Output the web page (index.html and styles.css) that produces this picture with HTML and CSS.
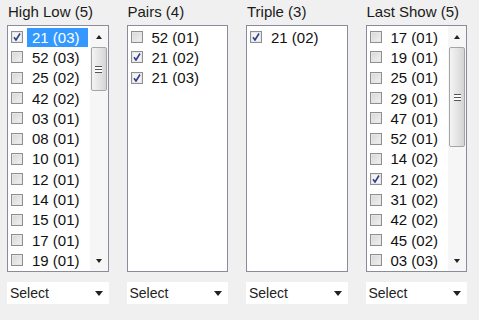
FILE: index.html
```html
<!DOCTYPE html>
<html lang="en">
<head>
    <meta charset="UTF-8">
    <title>Number Filters</title>
    <link rel="stylesheet" href="styles.css">
</head>
<body>
    <div class="filters">

        <div class="column">
            <div class="caption">High Low (5)</div>
            <div class="listbox">
                <ul class="items">
                    <li class="item"><span class="check on"></span><span class="text selected">21 (03)</span></li>
                    <li class="item"><span class="check"></span><span class="text">52 (03)</span></li>
                    <li class="item"><span class="check"></span><span class="text">25 (02)</span></li>
                    <li class="item"><span class="check"></span><span class="text">42 (02)</span></li>
                    <li class="item"><span class="check"></span><span class="text">03 (01)</span></li>
                    <li class="item"><span class="check"></span><span class="text">08 (01)</span></li>
                    <li class="item"><span class="check"></span><span class="text">10 (01)</span></li>
                    <li class="item"><span class="check"></span><span class="text">12 (01)</span></li>
                    <li class="item"><span class="check"></span><span class="text">14 (01)</span></li>
                    <li class="item"><span class="check"></span><span class="text">15 (01)</span></li>
                    <li class="item"><span class="check"></span><span class="text">17 (01)</span></li>
                    <li class="item"><span class="check"></span><span class="text">19 (01)</span></li>
                </ul>
                <div class="scrollbar">
                    <div class="arrow"><span class="tri up"></span></div>
                    <div class="track">
                        <div class="thumb" style="height: 42px"><span class="grip"></span></div>
                    </div>
                    <div class="arrow"><span class="tri down"></span></div>
                </div>
            </div>
            <div class="select">Select<span class="tri down"></span></div>
        </div>

        <div class="column">
            <div class="caption">Pairs (4)</div>
            <div class="listbox">
                <ul class="items">
                    <li class="item"><span class="check"></span><span class="text">52 (01)</span></li>
                    <li class="item"><span class="check on"></span><span class="text">21 (02)</span></li>
                    <li class="item"><span class="check on"></span><span class="text">21 (03)</span></li>
                </ul>
            </div>
            <div class="select">Select<span class="tri down"></span></div>
        </div>

        <div class="column">
            <div class="caption">Triple (3)</div>
            <div class="listbox">
                <ul class="items">
                    <li class="item"><span class="check on"></span><span class="text">21 (02)</span></li>
                </ul>
            </div>
            <div class="select">Select<span class="tri down"></span></div>
        </div>

        <div class="column">
            <div class="caption">Last Show (5)</div>
            <div class="listbox">
                <ul class="items">
                    <li class="item"><span class="check"></span><span class="text">17 (01)</span></li>
                    <li class="item"><span class="check"></span><span class="text">19 (01)</span></li>
                    <li class="item"><span class="check"></span><span class="text">25 (01)</span></li>
                    <li class="item"><span class="check"></span><span class="text">29 (01)</span></li>
                    <li class="item"><span class="check"></span><span class="text">47 (01)</span></li>
                    <li class="item"><span class="check"></span><span class="text">52 (01)</span></li>
                    <li class="item"><span class="check"></span><span class="text">14 (02)</span></li>
                    <li class="item"><span class="check on"></span><span class="text">21 (02)</span></li>
                    <li class="item"><span class="check"></span><span class="text">31 (02)</span></li>
                    <li class="item"><span class="check"></span><span class="text">42 (02)</span></li>
                    <li class="item"><span class="check"></span><span class="text">45 (02)</span></li>
                    <li class="item"><span class="check"></span><span class="text">03 (03)</span></li>
                </ul>
                <div class="scrollbar">
                    <div class="arrow"><span class="tri up"></span></div>
                    <div class="track">
                        <div class="thumb" style="height: 98px"><span class="grip"></span></div>
                    </div>
                    <div class="arrow"><span class="tri down"></span></div>
                </div>
            </div>
            <div class="select">Select<span class="tri down"></span></div>
        </div>

    </div>
</body>
</html>
```

FILE: styles.css
```css
body {
    margin: 0;
    background: #f0f0f0;
    font-family: 'Liberation Sans', Arial, sans-serif;
    color: #111;
}

.filters {
    display: flex;
    gap: 18px;
    padding: 3px 0 0 7px;
}

.column {
    width: 101.5px;
    display: flex;
    flex-direction: column;
}

.caption {
    height: 22px;
    line-height: 18px;
    font-size: 15px;
    padding-left: 1px;
    color: #1a1a1a;
}

/* list box */
.listbox {
    height: 245px;
    border: 1px solid #8b8c9b;
    background: #fff;
    display: flex;
}

.items {
    flex: 1;
    list-style: none;
    margin: 0;
    padding: 1px 0 0 0;
    overflow: hidden;
}

.item {
    height: 20.3px;
    display: flex;
    align-items: center;
    padding-left: 3px;
    font-size: 15px;
}

.check {
    width: 10px;
    height: 10px;
    flex: none;
    border: 1px solid #8e8f8f;
    background: linear-gradient(135deg, #d6d6d6, #f2f2f2);
    box-shadow: inset 0 0 0 1px #e6e6e6;
}

.check.on {
    background: #f4f4f4 url("data:image/svg+xml,%3Csvg xmlns='http://www.w3.org/2000/svg' width='10' height='10'%3E%3Cpath d='M2 5.2 L4 8 L8 1.5' fill='none' stroke='%23303f8c' stroke-width='1.6'/%3E%3C/svg%3E") center no-repeat;
}

.text {
    flex: 1;
    margin: 0 2px 0 4px;
    padding-left: 5px;
    height: 19px;
    line-height: 19px;
}

.text.selected {
    background: #3399ff;
    color: #fff;
}

/* scrollbar */
.scrollbar {
    width: 18px;
    flex: none;
    display: flex;
    flex-direction: column;
    background: #f6f6f6;
}

.arrow {
    height: 21px;
    display: flex;
    align-items: center;
    justify-content: center;
}

.track {
    flex: 1;
    padding: 0 1px;
}

.thumb {
    border: 1px solid #a5a5a5;
    border-radius: 2px;
    background: linear-gradient(to right, #f4f4f4, #e2e2e2 60%, #d4d4d4);
    display: flex;
    align-items: center;
    justify-content: center;
}

.grip {
    width: 7px;
    height: 5px;
    border-top: 1px solid #555;
    border-bottom: 1px solid #555;
    background: linear-gradient(#fff 2px, #555 2px, #555 3px, #fff 3px);
}

.tri {
    width: 0;
    height: 0;
    border-left: 3.5px solid transparent;
    border-right: 3.5px solid transparent;
}

.tri.up {
    border-bottom: 4px solid #222;
}

.tri.down {
    border-top: 4px solid #222;
}

/* combo */
.select {
    margin-top: 10px;
    height: 22px;
    background: #fff;
    display: flex;
    align-items: center;
    justify-content: space-between;
    padding: 0 6px 0 3px;
    font-size: 14px;
    color: #222;
}

.select .tri {
    border-left-width: 4px;
    border-right-width: 4px;
    border-top-width: 5px;
}
```
